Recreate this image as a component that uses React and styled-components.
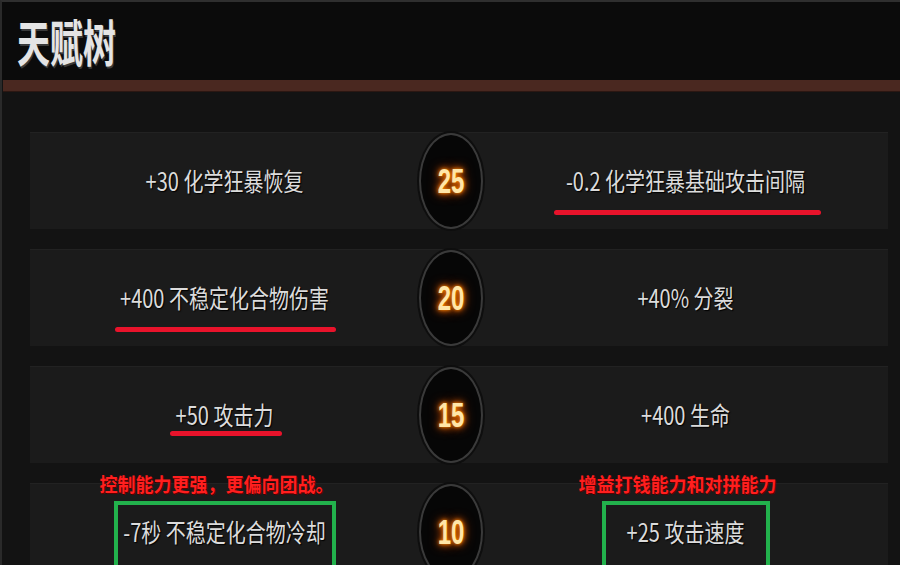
import React from 'react'
import styled, { createGlobalStyle } from 'styled-components'

const GlobalStyle = createGlobalStyle`
    html, body {
        margin: 0;
        padding: 0;
        background: #131313;
        overflow: hidden;
    }
`

const rows = [
    {
        level: 25,
        left: { text: '+30 化学狂暴恢复' },
        right: { text: '-0.2 化学狂暴基础攻击间隔', line: { left: 71, width: 267, top: 78 } },
    },
    {
        level: 20,
        left: { text: '+400 不稳定化合物伤害', line: { left: 85, width: 221, top: 78 } },
        right: { text: '+40% 分裂' },
    },
    {
        level: 15,
        left: { text: '+50 攻击力', line: { left: 140, width: 112, top: 65 } },
        right: { text: '+400 生命' },
    },
    {
        level: 10,
        left: { text: '-7秒 不稳定化合物冷却', note: '控制能力更强，更偏向团战。', box: 222 },
        right: { text: '+25 攻击速度', note: '增益打钱能力和对拼能力', box: 168 },
    },
]

const Cell = ({ item }) => (
    <TalentCell>
        {item.note && <Note>{item.note}</Note>}
        {item.box ? (
            <GreenBox $width={item.box}>
                <TalentText>{item.text}</TalentText>
            </GreenBox>
        ) : (
            <TalentText>{item.text}</TalentText>
        )}
        {item.line && (
            <RedLine $left={item.line.left} $width={item.line.width} $top={item.line.top} />
        )}
    </TalentCell>
)

const App = () => (
    <Frame>
        <GlobalStyle />
        <Header>
            <Title>天赋树</Title>
        </Header>
        <Divider />
        <Tree>
            {rows.map(row => (
                <TierRow key={row.level}>
                    <Cell item={row.left} />
                    <LevelBadge>
                        <LevelNum>{row.level}</LevelNum>
                    </LevelBadge>
                    <Cell item={row.right} />
                </TierRow>
            ))}
        </Tree>
    </Frame>
)

const Frame = styled.div`
    width: 900px;
    height: 565px;
    box-sizing: border-box;
    border-top: 2px solid #2f2f2f;
    border-left: 2px solid #2a2a2a;
    background: #131313;
    overflow: hidden;
    font-family: "Noto Sans CJK SC", "Noto Sans", sans-serif;
`

const Header = styled.div`
    height: 78px;
    background: #0b0b0b;
    display: flex;
    align-items: center;
    padding-left: 15px;
`

const Title = styled.h1`
    margin: 0;
    font-size: 33px;
    font-weight: 700;
    color: #e4e4e4;
    transform: scaleY(1.5);
    transform-origin: left center;
    text-shadow: 1px 1px 0 #3a3a3a;
`

const Divider = styled.div`
    height: 11px;
    margin-left: 1px;
    background: #4a2820;
    box-shadow: 0 1px 0 #2b1712;
`

const Tree = styled.div`
    display: flex;
    flex-direction: column;
    gap: 20px;
    padding: 41px 12px 0 28px;
`

const TierRow = styled.div`
    height: 97px;
    flex-shrink: 0;
    display: grid;
    grid-template-columns: 389px 64px 1fr;
    align-items: center;
    background: #1b1b1b;
    box-shadow: inset 0 1px 0 #222;
`

const TalentCell = styled.div`
    position: relative;
    height: 100%;
    display: flex;
    align-items: center;
    justify-content: center;
`

const TalentText = styled.span`
    display: inline-block;
    font-size: 20px;
    color: #dcdcdc;
    white-space: nowrap;
    transform: scaleY(1.25);
    text-shadow: 1px 1px 1px #000;
`

const RedLine = styled.div`
    position: absolute;
    left: ${p => p.$left}px;
    width: ${p => p.$width}px;
    top: ${p => p.$top}px;
    height: 5px;
    border-radius: 3px;
    background: #e8132b;
`

const Note = styled.div`
    position: absolute;
    top: -13px;
    left: 50%;
    transform: translateX(calc(-50% - 8px)) scaleY(1.1);
    font-size: 18px;
    font-weight: 700;
    color: #ff1f1f;
    white-space: nowrap;
    text-shadow: 1px 1px 0 #5a0000;
`

const GreenBox = styled.div`
    position: relative;
    top: 14px;
    width: ${p => p.$width}px;
    height: 90px;
    box-sizing: border-box;
    border: 4px solid #22b14c;
    display: flex;
    justify-content: center;
    align-items: flex-start;
    padding-top: 12px;
`

const LevelBadge = styled.div`
    width: 64px;
    height: 96px;
    box-sizing: border-box;
    border-radius: 50%;
    border: 2px solid #3a3a3a;
    background: #060606;
    box-shadow: 0 0 0 2px #0e0e0e;
    display: flex;
    align-items: center;
    justify-content: center;
`

const LevelNum = styled.span`
    font-family: "Liberation Sans", Arial, sans-serif;
    font-size: 24px;
    font-weight: 700;
    color: #ffe6a8;
    transform: scaleY(1.45);
    text-shadow: 0 0 3px #ff8a00, 0 0 6px #ff6a00, 0 0 10px #c04000;
`

export default App
